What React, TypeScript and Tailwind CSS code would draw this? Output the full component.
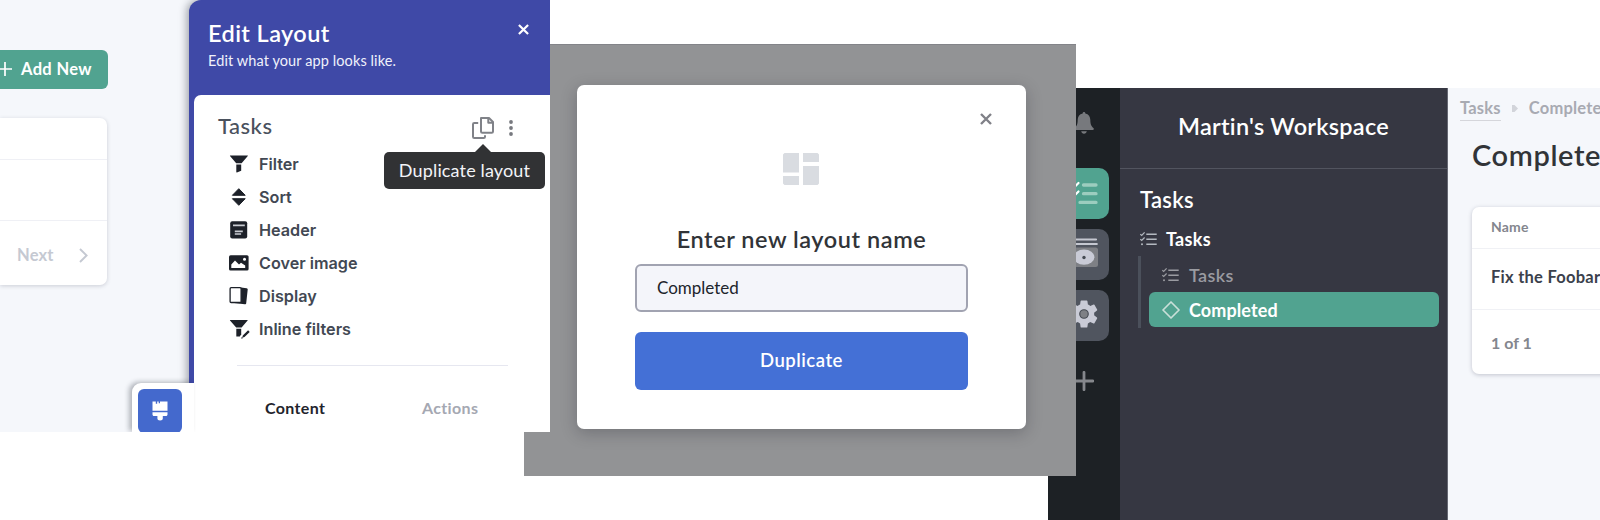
import React from "react";

const FunnelIcon = () => (
  <svg viewBox="0 0 20 20" className="h-5 w-5" fill="#1d2129">
    <path d="M1.2 1.5h17.4c.3 0 .4.2.2.4L12.6 9.2H7.2L1 1.9c-.2-.2 0-.4.2-.4z" />
    <path d="M7.3 10.5h4.9v6.3l-4.3 1.6c-.3.1-.6 0-.6-.3z" />
  </svg>
);
const SortIcon = () => (
  <svg viewBox="0 0 20 20" className="h-5 w-5" fill="#1d2129" stroke="#1d2129" strokeLinejoin="round">
    <path d="M9.8 1.7 16.2 8.300H3.400z" />
    <path d="M9.8 18.3 16.2 11.700H3.400z" />
  </svg>
);
const HeaderIcon = () => (
  <svg viewBox="0 0 20 20" className="h-5 w-5">
    <rect x="1.2" y="1.3" width="17" height="17.2" rx="2" fill="#1d2129" />
    <path d="M4 5.4h11.8M5.8 11.4h8M5.8 14h6.3" stroke="#c9ccd2" strokeWidth="1.6" />
  </svg>
);
const ImageIcon = () => (
  <svg viewBox="0 0 20 20" className="h-5 w-5">
    <rect x="0" y="2.2" width="19.6" height="15.4" rx="1.6" fill="#1d2129" />
    <path d="M2.3 15V11.5L6 7.6l4 4 2-1.8 4.2 2.6V15z" fill="#fff" />
    <circle cx="15.5" cy="6.2" r="1.5" fill="#fff" />
  </svg>
);
const DisplayIcon = () => (
  <svg viewBox="0 0 20 20" className="h-5 w-5">
    <path d="M12 1.4 17.6 2.3c.8.1 1.2.6 1.1 1.3l-1.5 13.6c-.1.8-.6 1.2-1.4 1.1L3 16.8z" fill="#1d2129" />
    <rect x="1.1" y="1.7" width="11" height="14.8" rx="1" fill="#fff" stroke="#1d2129" strokeWidth="1.3" />
  </svg>
);
const InlineFilterIcon = () => (
  <svg viewBox="0 0 22 20" className="h-5 w-[22px]" fill="#1d2129">
    <path d="M1.2 1h17.2c.3 0 .4.2.2.4L12.6 8.4H7.2L1 1.4c-.2-.2 0-.4.2-.4z" />
    <path d="M7.3 9.8h4.9v5.4l-1.4 2.2H7.3z" />
    <path d="m13.8 16.4 5.3-5.1 1.6 1.6-5.2 5.1-2.3.7zM12.2 18.6h1.4v1h-1.4z" />
  </svg>
);

const options = [
  { label: "Filter", Icon: FunnelIcon },
  { label: "Sort", Icon: SortIcon },
  { label: "Header", Icon: HeaderIcon },
  { label: "Cover image", Icon: ImageIcon },
  { label: "Display", Icon: DisplayIcon },
  { label: "Inline filters", Icon: InlineFilterIcon },
];

const Cross = ({ className }: { className: string }) => (
  <svg viewBox="0 0 12 12" className={className} fill="none" stroke="currentColor" strokeWidth="2.4">
    <path d="M1 1l10 10M11 1 1 11" />
  </svg>
);

const Checklist = ({ className }: { className: string }) => (
  <svg viewBox="0 0 17 14" className={className} fill="none" stroke="currentColor" strokeWidth="1.2">
    <path d="M6.3 2.3h10.4M6.3 7.2h10.4M6.3 12.2h10.4" strokeWidth="1.5" />
    <path d="M.3 2.1l1.4 1.3L4.6.4M.3 7.2l1.4 1.3 2.9-3" />
    <circle cx="2" cy="12.2" r="1" fill="currentColor" stroke="none" />
  </svg>
);

function EditLayoutShot() {
  return (
    <section className="relative z-30 flex h-[432px] w-[550px] shrink-0 overflow-hidden bg-[#f5f7fb]">
      <div className="flex w-[189px] shrink-0 flex-col pt-[50px]">
        <div className="flex h-[39px] w-[108px] items-center rounded-r-[6px] bg-[#51a390] pb-[2px] text-white">
          <svg viewBox="0 0 14 14" className="-ml-[2px] h-[14px] w-[14px] shrink-0" stroke="currentColor" strokeWidth="1.7">
            <path d="M0 7h14M7 0v14" />
          </svg>
          <span className="ml-[9px] whitespace-nowrap text-[16.500px] font-bold leading-5 tracking-[0.35px]">Add New</span>
        </div>
        <div className="mt-[29px] flex h-[167px] w-[107px] flex-col rounded-r-[7px] bg-white shadow-[0_1px_4px_rgba(40,45,70,0.2)]">
          <div className="h-[42px] border-b border-[#eff0f5]" />
          <div className="h-[61px] border-b border-[#eff0f5]" />
          <div className="flex flex-1 items-center pt-[4px] text-[#c5c9d2]">
            <span className="ml-[17px] w-[36px] text-[16.500px] font-bold leading-5 tracking-[0.2px]">Next</span>
            <svg viewBox="0 0 9 15" className="ml-[26px] h-[15px] w-[9px]" fill="none" stroke="currentColor" strokeWidth="1.9">
              <path d="M1 1l6.6 6.5L1 14" />
            </svg>
          </div>
        </div>
      </div>
      <aside className="flex flex-1 flex-col rounded-tl-[12px] bg-[#3f49a7] shadow-[-2px_0_8px_rgba(20,25,40,0.4)]">
        <header className="flex h-[95px] shrink-0 justify-between pl-[19px] pr-[21px]">
          <div className="pt-[19px] text-white">
            <h1 className="text-[23.500px] font-semibold leading-7 tracking-[0.4px]">Edit Layout</h1>
            <p className="mt-[4px] text-[14.500px] leading-5 tracking-[0.1px] text-[#f0f1fb]">Edit what your app looks like.</p>
          </div>
          <Cross className="mt-[24px] h-[11px] w-[11px] text-white" />
        </header>
        <div className="ml-[5px] flex flex-1 flex-col rounded-tl-[7px] bg-white pl-[24px]">
          <div className="flex h-[52px] items-start pt-[17px]">
            <h2 className="w-[254px] text-[22px] font-medium leading-7 tracking-[0.5px] text-[#4a515d]">Tasks</h2>
            <div className="relative mt-[5px]">
              <svg viewBox="0 0 22 22" className="h-[22px] w-[22px]" fill="none" stroke="#808288" strokeWidth="2" strokeLinejoin="round">
                <path d="M9 1h8l4 4v9.5c0 .8-.5 1.3-1.3 1.3H10.300c-.8 0-1.300-.5-1.300-1.300z" />
                <path d="M16.300 1v4.800H21" />
                <path d="M6.200 6H2.300C1.500 6 1 6.500 1 7.300v12.400c0 .8.500 1.300 1.300 1.300h9.400c.8 0 1.300-.5 1.300-1.300v-1.400" />
              </svg>
              <div className="absolute -left-[88px] top-[35px] flex h-[37px] w-[161px] items-center justify-center rounded-[5px] bg-[#313234] pb-[2px] text-[18px] leading-6 text-[#f3f4f8]">
                <svg viewBox="0 0 18 9" className="absolute -top-[8px] left-[90px] h-[9px] w-[18px]" fill="#313234">
                  <path d="M0 9 9 0l9 9z" />
                </svg>
                <span className="whitespace-nowrap tracking-[0.15px]">Duplicate layout</span>
              </div>
            </div>
            <svg viewBox="0 0 4 16" className="ml-[15px] mt-[8px] h-4 w-1" fill="#77797f">
              <circle cx="2" cy="2" r="1.9" />
              <circle cx="2" cy="8" r="1.9" />
              <circle cx="2" cy="14" r="1.9" />
            </svg>
          </div>
          <ul className="flex flex-col pl-[11px]">
            {options.map(({ label, Icon }) => (
              <li key={label} className="flex h-[33px] items-center">
                <span className="w-[30px]">
                  <Icon />
                </span>
                <span className="font-[Inter] text-[16.200px] font-semibold leading-5 text-[#424853]">{label}</span>
              </li>
            ))}
          </ul>
          <div className="ml-[19px] mt-[20px] h-px w-[271px] bg-[#e6e7f0]" />
          <div className="flex pt-[32px] text-[16px] font-bold leading-5 tracking-[0.35px]">
            <span className="ml-[47px] w-[157px] text-[#1f242c]">Content</span>
            <span className="text-[#a5a8b2]">Actions</span>
          </div>
        </div>
      </aside>
      <div className="absolute left-[132px] top-[383px] h-[49px] w-[62px] overflow-hidden rounded-tl-[9px] bg-white pl-[6px] pt-[6px] shadow-[-3px_-1px_5px_rgba(20,25,40,0.3)]">
        <div className="flex h-[44px] w-[44px] items-center justify-center rounded-[6px] bg-[#4469cd]">
          <svg viewBox="0 0 16 20" className="h-5 w-4" fill="#fff">
            <path d="M.5.500h3.300v2.300h1.400V.500h1.500v1.800h1.300V.500h7.500v9.300H.500z" />
            <path d="M.500 11.200h15v2.300c0 .9-.6 1.500-1.500 1.500h-3.200v2.600c0 1-1 2-2.700 2s-2.700-1-2.700-2V15H2c-.9 0-1.500-.6-1.500-1.500z" />
          </svg>
        </div>
      </div>
    </section>
  );
}

function DuplicateShot() {
  return (
    <section className="relative z-20 -ml-[26px] mt-[44px] flex h-[432px] w-[552px] shrink-0 items-start overflow-hidden border-t border-[#838489] bg-[#929395] pl-[53px] pt-[40px]">
      <div className="flex h-[344px] w-[449px] flex-col rounded-[7px] bg-white px-[58px] shadow-[0_4px_16px_rgba(20,20,30,0.25)]">
        <Cross className="-mr-[24px] mt-[28px] h-[12px] w-[12px] self-end text-[#808188]" />
        <svg viewBox="0 0 36 32" className="mt-[28px] h-8 w-9 -translate-x-px self-center" fill="#d9dce1">
          <path d="M1.500 0H16v19.500H0V1.500zM20 0h14.500L36 1.500V9H20zM0 23h16v9H1.500L0 30.500zM20 13h16v17.500L34.500 32H20z" />
        </svg>
        <h2 className="mt-[38px] self-center whitespace-nowrap text-[23.500px] font-semibold leading-8 tracking-[0.550px] text-[#313438]">
          Enter new layout name
        </h2>
        <div className="mt-[9px] flex h-[48px] shrink-0 items-center rounded-[6px] border-2 border-[#a1a3b1] bg-[#f4f5fa] pl-[20px] text-[17px] leading-6 text-[#20242b]">
          <span>Completed</span>
        </div>
        <button className="mt-[20px] flex h-[58px] shrink-0 items-center justify-center rounded-[6px] bg-[#4470d6] pb-[2px] text-[18.500px] font-semibold leading-6 tracking-[0.5px] text-white">
          Duplicate
        </button>
      </div>
    </section>
  );
}

function WorkspaceShot() {
  return (
    <section className="relative z-10 -ml-[28px] mt-[88px] flex h-[432px] w-[552px] shrink-0 overflow-hidden bg-[#f5f7fb]">
      <nav className="flex w-[72px] shrink-0 flex-col items-center bg-[#1d2125] pr-px">
        <svg viewBox="0 0 20 22" className="mt-[24px] h-[22px] w-5" fill="#77797d">
          <path d="M10 0c.9 0 1.300.6 1.300 1.400 3.400.6 5 3.200 5 6.400 0 5.200 1.400 6.700 3.100 8.200.8.800.5 1.900-.6 1.900H1.200c-1.100 0-1.400-1.100-.6-1.900 1.700-1.500 3.100-3 3.100-8.200 0-3.200 1.600-5.800 5-6.400C8.700.600 9.100 0 10 0zM7.200 19.200h5.600c-.3 1.600-1.300 2.500-2.800 2.500s-2.500-.9-2.800-2.500z" />
        </svg>
        <div className="mt-[34px] flex h-[51px] w-[51px] shrink-0 items-center justify-center rounded-[10px] bg-[#51a390]">
          <svg viewBox="0 0 30 24" className="mb-[2px] h-6 w-[30px]" fill="none" strokeLinecap="round">
            <path d="M14.500 4h12.500M14.500 12.700h12.500M11 21.400h16" stroke="#9ccdbf" strokeWidth="3.300" />
            <path d="M2 3.500l3 3L9.500 2M2 12l3 3 4.500-4.500" stroke="#fff" strokeWidth="2.200" />
          </svg>
        </div>
        <div className="mt-[10px] flex h-[51px] w-[51px] shrink-0 items-center justify-center rounded-[10px] bg-[#50555f]">
          <svg viewBox="0 0 28 30" className="mb-[3px] h-[30px] w-7">
            <path d="M1.500 1.500h24.500M.800 6h26" stroke="#c5c8d1" strokeWidth="2.200" strokeLinecap="round" />
            <rect x="0" y="9.500" width="28" height="19.500" rx="2.500" fill="#7e8085" />
            <ellipse cx="14" cy="19.200" rx="10.400" ry="7.600" fill="#c9cbd6" />
            <circle cx="14" cy="19.500" r="1.700" fill="#454a52" />
          </svg>
        </div>
        <div className="mt-[10px] flex h-[51px] w-[51px] shrink-0 items-center justify-center rounded-[10px] bg-[#50555f]">
          <svg viewBox="0 0 24 24" className="mb-[3px] h-[34px] w-[34px]" fill="#c9cbd6">
            <path d="M19.140 12.940c.040-.300.060-.610.060-.940 0-.320-.020-.640-.070-.940l2.030-1.580a.490.490 0 0 0 .120-.610l-1.920-3.320a.488.488 0 0 0-.590-.220l-2.390.960c-.500-.380-1.030-.700-1.620-.940l-.360-2.540a.484.484 0 0 0-.480-.410h-3.840c-.240 0-.430.170-.470.410l-.360 2.540c-.590.240-1.130.570-1.620.940l-2.390-.960c-.220-.080-.470 0-.590.220L2.740 8.870c-.120.210-.080.470.120.610l2.030 1.580c-.050.300-.090.630-.090.940s.020.640.070.940l-2.030 1.580a.490.490 0 0 0-.120.610l1.920 3.320c.120.220.370.290.590.220l2.390-.960c.500.380 1.030.700 1.620.940l.360 2.540c.050.240.240.410.480.410h3.840c.240 0 .440-.170.470-.410l.360-2.540c.590-.240 1.130-.560 1.620-.940l2.390.960c.220.080.470 0 .590-.220l1.920-3.320c.120-.220.070-.470-.120-.610z" />
            <circle cx="12" cy="12" r="3" fill="#7e8085" stroke="#454a52" strokeWidth=".8" />
          </svg>
        </div>
        <svg viewBox="0 0 20 20" className="mt-[30px] h-5 w-5" stroke="#85878c" strokeWidth="2.800" strokeLinecap="round">
          <path d="M1 10h18M10 1.300v17.400" />
        </svg>
      </nav>
      <aside className="flex w-[328px] shrink-0 flex-col border-r border-[#666873] bg-[#363742]">
        <div className="flex h-[81px] shrink-0 items-center justify-center border-b border-[#52545f] pb-[4px]">
          <h1 className="text-[23.500px] font-semibold leading-7 tracking-[0.250px] text-white">Martin's Workspace</h1>
        </div>
        <h2 className="mt-[17px] pl-[20px] text-[22px] font-semibold leading-7 tracking-[0.3px] text-white">Tasks</h2>
        <div className="mt-[13px] flex h-[24px] items-center pl-[20px] text-white">
          <Checklist className="h-[14px] w-[17px] text-[#b4b9c0]" />
          <span className="ml-[9px] text-[18px] font-bold leading-6 tracking-[0.3px]">Tasks</span>
        </div>
        <div className="ml-[18px] mt-[5px] flex h-[72px]">
          <div className="h-full w-[3px] bg-[#4b505b]" />
          <div className="ml-[8px] flex flex-col">
            <div className="flex h-[36px] items-center pl-[13px] pt-[2px] text-[#9a9ba1]">
              <Checklist className="h-[14px] w-[17px]" />
              <span className="ml-[10px] text-[18px] font-semibold leading-6 tracking-[0.4px]">Tasks</span>
            </div>
            <div className="flex h-[35px] w-[290px] items-center rounded-[6px] bg-[#51a390] pl-[13px] text-white">
              <svg viewBox="0 0 18 18" className="h-[18px] w-[18px]" fill="none" stroke="#c9dfd9" strokeWidth="1.700" strokeLinejoin="round">
                <path d="M9 1l8 8-8 8-8-8z" />
              </svg>
              <span className="ml-[9px] text-[18px] font-bold leading-6 tracking-[0.1px]">Completed</span>
            </div>
          </div>
        </div>
      </aside>
      <main className="flex min-w-0 flex-1 flex-col overflow-hidden whitespace-nowrap pl-[12px]">
        <div className="mt-[8px] flex items-center text-[16.500px] font-bold tracking-[0.2px] text-[#a8aab2]">
          <span className="h-[25px] shrink-0 border-b border-[#d5d6db] leading-[24px]">Tasks</span>
          <svg viewBox="0 0 6 7" className="ml-[11px] h-[7px] w-[6px] shrink-0" fill="#d2d4da">
            <path d="M0 0h2.500L6 3.500 2.500 7H0z" />
          </svg>
          <span className="ml-[11px] h-[25px] leading-[24px]">Completed</span>
        </div>
        <h1 className="ml-[12px] mt-[16px] text-[29px] font-semibold leading-[36px] tracking-[0.6px] text-[#313438]">Completed</h1>
        <div className="ml-[12px] mt-[34px] flex h-[167px] w-[300px] shrink-0 flex-col rounded-[7px] bg-white shadow-[0_1px_4px_rgba(40,45,70,0.25)]">
          <div className="flex h-[42px] items-center border-b border-[#f0f1f5] pb-[2px] pl-[19px] text-[14px] font-bold tracking-[0.2px] text-[#84868e]">Name</div>
          <div className="flex h-[61px] items-center border-b border-[#f0f1f5] pb-[3px] pl-[19px] text-[16.500px] font-bold tracking-[0.250px] text-[#3b414c]">Fix the Foobar</div>
          <div className="flex flex-1 items-center pl-[19px] pt-[2px] text-[16px] font-bold text-[#84868e]">1 of 1</div>
        </div>
      </main>
    </section>
  );
}

export default function App() {
  return (
    <div className="flex h-[520px] w-[1600px] items-start overflow-hidden bg-white font-[Lato,sans-serif]">
      <EditLayoutShot />
      <DuplicateShot />
      <WorkspaceShot />
    </div>
  );
}
